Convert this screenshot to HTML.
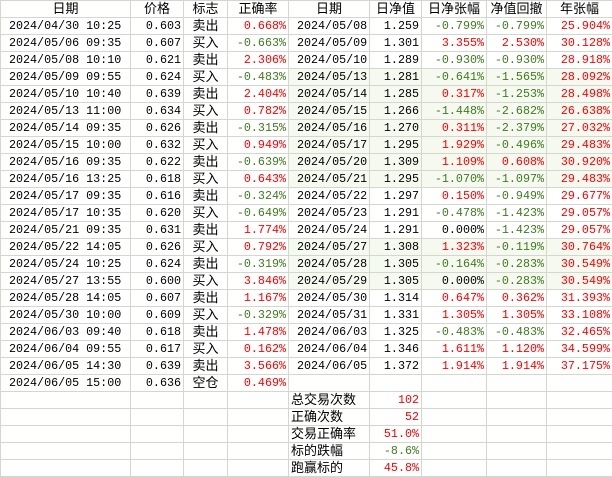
<!DOCTYPE html>
<html><head><meta charset="utf-8"><style>
body{margin:0;background:#fff;width:612px;height:476px;overflow:hidden}
table{border-collapse:collapse;table-layout:fixed;width:612px;font-family:"Liberation Mono","Noto Sans CJK SC",monospace;font-size:11.7px;color:#000}
td{border:1px solid #d2d8ca;height:16px;padding:0 2px;white-space:nowrap;overflow:hidden;line-height:15px;vertical-align:middle}
tr{height:17px}
.h td,.c,.k{font-family:"Noto Sans CJK SC",sans-serif;font-size:13px;line-height:13px;height:13px;padding-bottom:3px;padding-top:0}
.h td{text-align:center}
.r{text-align:right}
.l{padding-left:8px}
.c{text-align:center}
.R{color:#f00;text-align:right}
.G{color:#3f7a1e;text-align:right}
.t td.x{background:#f5f9ef}
</style></head><body>
<table>
<colgroup><col style="width:130px"><col style="width:53px"><col style="width:44px"><col style="width:61px"><col style="width:81px"><col style="width:52px"><col style="width:65px"><col style="width:60px"><col style="width:66px"></colgroup>
<tr class="h"><td>日期</td><td>价格</td><td>标志</td><td>正确率</td><td>日期</td><td>日净值</td><td>日净张幅</td><td>净值回撤</td><td>年张幅</td></tr>
<tr><td class="l">2024/04/30 10:25</td><td class="r">0.603</td><td class="c">卖出</td><td class="R">0.668%</td><td class="l">2024/05/08</td><td class="r">1.259</td><td class="G">-0.799%</td><td class="G">-0.799%</td><td class="R">25.904%</td></tr>
<tr><td class="l">2024/05/06 09:35</td><td class="r">0.607</td><td class="c">买入</td><td class="G">-0.663%</td><td class="l">2024/05/09</td><td class="r">1.301</td><td class="R">3.355%</td><td class="R">2.530%</td><td class="R">30.128%</td></tr>
<tr><td class="l">2024/05/08 10:10</td><td class="r">0.621</td><td class="c">卖出</td><td class="R">2.306%</td><td class="l">2024/05/10</td><td class="r">1.289</td><td class="G">-0.930%</td><td class="G">-0.930%</td><td class="R">28.918%</td></tr>
<tr class="t"><td class="l">2024/05/09 09:55</td><td class="r">0.624</td><td class="c">买入</td><td class="G">-0.483%</td><td class="l x">2024/05/13</td><td class="r x">1.281</td><td class="G x">-0.641%</td><td class="G x">-1.565%</td><td class="R x">28.092%</td></tr>
<tr class="t"><td class="l">2024/05/10 10:40</td><td class="r">0.639</td><td class="c">卖出</td><td class="R">2.404%</td><td class="l x">2024/05/14</td><td class="r x">1.285</td><td class="R x">0.317%</td><td class="G x">-1.253%</td><td class="R x">28.498%</td></tr>
<tr class="t"><td class="l">2024/05/13 11:00</td><td class="r">0.634</td><td class="c">买入</td><td class="R">0.782%</td><td class="l x">2024/05/15</td><td class="r x">1.266</td><td class="G x">-1.448%</td><td class="G x">-2.682%</td><td class="R x">26.638%</td></tr>
<tr class="t"><td class="l">2024/05/14 09:35</td><td class="r">0.626</td><td class="c">卖出</td><td class="G">-0.315%</td><td class="l x">2024/05/16</td><td class="r x">1.270</td><td class="R x">0.311%</td><td class="G x">-2.379%</td><td class="R x">27.032%</td></tr>
<tr class="t"><td class="l">2024/05/15 10:00</td><td class="r">0.632</td><td class="c">买入</td><td class="R">0.949%</td><td class="l x">2024/05/17</td><td class="r x">1.295</td><td class="R x">1.929%</td><td class="G x">-0.496%</td><td class="R x">29.483%</td></tr>
<tr class="t"><td class="l">2024/05/16 09:35</td><td class="r">0.622</td><td class="c">卖出</td><td class="G">-0.639%</td><td class="l x">2024/05/20</td><td class="r x">1.309</td><td class="R x">1.109%</td><td class="R x">0.608%</td><td class="R x">30.920%</td></tr>
<tr class="t"><td class="l">2024/05/16 13:25</td><td class="r">0.618</td><td class="c">买入</td><td class="R">0.643%</td><td class="l x">2024/05/21</td><td class="r x">1.295</td><td class="G x">-1.070%</td><td class="G x">-1.097%</td><td class="R x">29.483%</td></tr>
<tr><td class="l">2024/05/17 09:35</td><td class="r">0.616</td><td class="c">卖出</td><td class="G">-0.324%</td><td class="l">2024/05/22</td><td class="r">1.297</td><td class="R">0.150%</td><td class="G">-0.949%</td><td class="R">29.677%</td></tr>
<tr><td class="l">2024/05/17 10:35</td><td class="r">0.620</td><td class="c">买入</td><td class="G">-0.649%</td><td class="l">2024/05/23</td><td class="r">1.291</td><td class="G">-0.478%</td><td class="G">-1.423%</td><td class="R">29.057%</td></tr>
<tr><td class="l">2024/05/21 09:35</td><td class="r">0.631</td><td class="c">卖出</td><td class="R">1.774%</td><td class="l">2024/05/24</td><td class="r">1.291</td><td class="r">0.000%</td><td class="G">-1.423%</td><td class="R">29.057%</td></tr>
<tr class="t"><td class="l">2024/05/22 14:05</td><td class="r">0.626</td><td class="c">买入</td><td class="R">0.792%</td><td class="l x">2024/05/27</td><td class="r x">1.308</td><td class="R x">1.323%</td><td class="G x">-0.119%</td><td class="R x">30.764%</td></tr>
<tr class="t"><td class="l">2024/05/24 10:25</td><td class="r">0.624</td><td class="c">卖出</td><td class="G">-0.319%</td><td class="l x">2024/05/28</td><td class="r x">1.305</td><td class="G x">-0.164%</td><td class="G x">-0.283%</td><td class="R x">30.549%</td></tr>
<tr class="t"><td class="l">2024/05/27 13:55</td><td class="r">0.600</td><td class="c">买入</td><td class="R">3.846%</td><td class="l x">2024/05/29</td><td class="r x">1.305</td><td class="r x">0.000%</td><td class="G x">-0.283%</td><td class="R x">30.549%</td></tr>
<tr><td class="l">2024/05/28 14:05</td><td class="r">0.607</td><td class="c">卖出</td><td class="R">1.167%</td><td class="l">2024/05/30</td><td class="r">1.314</td><td class="R">0.647%</td><td class="R">0.362%</td><td class="R">31.393%</td></tr>
<tr><td class="l">2024/05/30 10:00</td><td class="r">0.609</td><td class="c">买入</td><td class="G">-0.329%</td><td class="l">2024/05/31</td><td class="r">1.331</td><td class="R">1.305%</td><td class="R">1.305%</td><td class="R">33.108%</td></tr>
<tr><td class="l">2024/06/03 09:40</td><td class="r">0.618</td><td class="c">卖出</td><td class="R">1.478%</td><td class="l">2024/06/03</td><td class="r">1.325</td><td class="G">-0.483%</td><td class="G">-0.483%</td><td class="R">32.465%</td></tr>
<tr><td class="l">2024/06/04 09:55</td><td class="r">0.617</td><td class="c">买入</td><td class="R">0.162%</td><td class="l">2024/06/04</td><td class="r">1.346</td><td class="R">1.611%</td><td class="R">1.120%</td><td class="R">34.599%</td></tr>
<tr><td class="l">2024/06/05 14:30</td><td class="r">0.639</td><td class="c">卖出</td><td class="R">3.566%</td><td class="l">2024/06/05</td><td class="r">1.372</td><td class="R">1.914%</td><td class="R">1.914%</td><td class="R">37.175%</td></tr>
<tr><td class="l">2024/06/05 15:00</td><td class="r">0.636</td><td class="c">空仓</td><td class="R">0.469%</td><td></td><td></td><td></td><td></td><td></td></tr>
<tr><td></td><td></td><td></td><td></td><td class="k">总交易次数</td><td class="R">102</td><td></td><td></td><td></td></tr>
<tr><td></td><td></td><td></td><td></td><td class="k">正确次数</td><td class="R">52</td><td></td><td></td><td></td></tr>
<tr><td></td><td></td><td></td><td></td><td class="k">交易正确率</td><td class="R">51.0%</td><td></td><td></td><td></td></tr>
<tr><td></td><td></td><td></td><td></td><td class="k">标的跌幅</td><td class="G">-8.6%</td><td></td><td></td><td></td></tr>
<tr><td></td><td></td><td></td><td></td><td class="k">跑赢标的</td><td class="R">45.8%</td><td></td><td></td><td></td></tr>
</table>
</body></html>
